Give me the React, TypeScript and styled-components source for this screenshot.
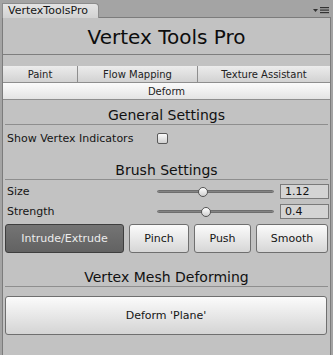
import React from 'react';
import styled, { createGlobalStyle } from 'styled-components';

const GlobalStyle = createGlobalStyle`
    html, body {
        margin:0;
        padding:0;
        background:#a4a4a4;
        font-family:"DejaVu Sans", "Liberation Sans", sans-serif;
        color:#111;
    }
`

const sliders = [
    { label: 'Size', value: 1.12, min: 0, max: 3, text: '1.12' },
    { label: 'Strength', value: 0.4, min: 0, max: 1, text: '0.4' },
]

const tools = [
    { name: 'Intrude/Extrude', width: 119, active: true },
    { name: 'Pinch', width: 60, active: false },
    { name: 'Push', width: 57, active: false },
    { name: 'Smooth', width: 72, active: false },
]

const App = () => {
    return (
        <Window>
            <GlobalStyle />
            <TabStrip>
                <Tab>VertexToolsPro</Tab>
                <MenuIcon width="16" height="8" viewBox="0 0 16 8">
                    <path d="M0 3 L5 3 L2.5 6 Z" fill="#333" />
                    <rect x="7" y="1" width="9" height="1.2" fill="#333" />
                    <rect x="7" y="3.5" width="9" height="1.2" fill="#333" />
                    <rect x="7" y="6" width="9" height="1.2" fill="#333" />
                </MenuIcon>
            </TabStrip>
            <Panel>
                <TitleBar>Vertex Tools Pro</TitleBar>
                <Toolbar>
                    <ToolbarRow>
                        <ToolbarButton $width={75}>Paint</ToolbarButton>
                        <ToolbarButton $width={120}>Flow Mapping</ToolbarButton>
                        <ToolbarButton $width={132}>Texture Assistant</ToolbarButton>
                    </ToolbarRow>
                    <ToolbarRow>
                        <ToolbarButton $selected>Deform</ToolbarButton>
                    </ToolbarRow>
                </Toolbar>

                <Heading $top={6}>General Settings</Heading>
                <FieldRow $top={4}>
                    <Label>Show Vertex Indicators</Label>
                    <Checkbox />
                </FieldRow>

                <Heading $top={14}>Brush Settings</Heading>
                <Sliders>
                    {sliders.map((s) => {
                        const pct = (s.value - s.min) / (s.max - s.min)
                        return (
                            <SliderRow key={s.label}>
                                <Label>{s.label}</Label>
                                <Track>
                                    <Thumb style={{ left: `${pct * 107}px` }} />
                                </Track>
                                <NumberField>{s.text}</NumberField>
                            </SliderRow>
                        )
                    })}
                </Sliders>
                <ToolButtons>
                    {tools.map((t) => (
                        <ToolButton key={t.name} $width={t.width} $active={t.active}>{t.name}</ToolButton>
                    ))}
                </ToolButtons>

                <Heading $top={15}>Vertex Mesh Deforming</Heading>
                <BigButton>Deform 'Plane'</BigButton>
            </Panel>
        </Window>
    );
};

const Window = styled.div`
    width:333px;
    height:355px;
    display:flex;
    flex-direction:column;
    overflow:hidden;
`
const TabStrip = styled.div`
    height:17px;
    display:flex;
    align-items:flex-end;
    justify-content:space-between;
    padding-left:2px;
    padding-right:4px;
    flex-shrink:0;
`
const Tab = styled.div`
    width:97px;
    height:15px;
    box-sizing:border-box;
    background:linear-gradient(#e4e4e4, #d2d2d2);
    border:1px solid #8c8c8c;
    border-bottom:none;
    border-top-right-radius:4px;
    font-size:11px;
    line-height:14px;
    padding-left:5px;
    color:#151515;
    margin-bottom:-1px;
    position:relative;
    z-index:1;
`
const MenuIcon = styled.svg`
    margin-bottom:3px;
`
const Panel = styled.div`
    flex:1;
    margin:0 2px;
    background:#c2c2c2;
    border:1px solid #7c7c7c;
    border-bottom:none;
    display:flex;
    flex-direction:column;
`
const TitleBar = styled.div`
    height:37px;
    border-bottom:1px solid #7e7e7e;
    display:flex;
    align-items:center;
    justify-content:center;
    font-size:20px;
    padding-top:1px;
    box-sizing:border-box;
    color:#0d0d0d;
`
const Toolbar = styled.div`
    margin-top:11px;
    display:flex;
    flex-direction:column;
`
const ToolbarRow = styled.div`
    display:flex;
    height:17px;
`
const ToolbarButton = styled.div<{ $width?: number; $selected?: boolean }>`
    ${(p) => (p.$width ? `width:${p.$width}px;` : 'flex:1;')}
    box-sizing:border-box;
    display:flex;
    align-items:center;
    justify-content:center;
    font-size:10px;
    color:#222;
    background:${(p) => (p.$selected ? 'linear-gradient(#fbfbfb, #e4e4e4)' : 'linear-gradient(#ececec, #d2d2d2)')};
    border-bottom:1px solid #8e8e8e;
    border-right:1px solid #8e8e8e;
    &:last-child {
        border-right:none;
    }
`
const Heading = styled.div<{ $top: number }>`
    margin:${(p) => p.$top}px 2px 0 2px;
    height:18px;
    border-bottom:1px solid #8e8e8e;
    font-size:14px;
    line-height:18px;
    text-align:center;
    color:#111;
`
const FieldRow = styled.div<{ $top: number }>`
    margin-top:${(p) => p.$top}px;
    height:18px;
    display:flex;
    align-items:center;
    padding-left:4px;
`
const Label = styled.div`
    width:150px;
    font-size:11px;
    color:#151515;
`
const Checkbox = styled.div`
    width:11px;
    height:11px;
    box-sizing:border-box;
    border:1px solid #5a5a5a;
    border-radius:2px;
    background:linear-gradient(#fafafa, #d0d0d0);
`
const Sliders = styled.div`
    margin-top:1px;
    display:flex;
    flex-direction:column;
`
const SliderRow = styled.div`
    height:20px;
    display:flex;
    align-items:center;
    padding-left:4px;
`
const Track = styled.div`
    position:relative;
    width:117px;
    height:3px;
    border-radius:2px;
    background:linear-gradient(#5e5e5e, #a8a8a8);
    border:1px solid #6e6e6e;
    box-sizing:border-box;
`
const Thumb = styled.div`
    position:absolute;
    top:-4px;
    width:10px;
    height:10px;
    box-sizing:border-box;
    border-radius:50%;
    border:1px solid #555;
    background:linear-gradient(#ffffff, #cfcfcf);
`
const NumberField = styled.div`
    margin-left:6px;
    width:49px;
    height:15px;
    box-sizing:border-box;
    border:1px solid #7a7a7a;
    background:#d4d4d4;
    font-size:11px;
    line-height:13px;
    padding-left:4px;
    color:#111;
`
const ToolButtons = styled.div`
    margin-top:3px;
    display:flex;
    gap:5px;
    padding-left:2px;
`
const ToolButton = styled.div<{ $width: number; $active: boolean }>`
    width:${(p) => p.$width}px;
    height:29px;
    box-sizing:border-box;
    border-radius:3px;
    display:flex;
    align-items:center;
    justify-content:center;
    font-size:11px;
    border:1px solid ${(p) => (p.$active ? '#3e3e3e' : '#6f6f6f')};
    color:${(p) => (p.$active ? '#ececec' : '#151515')};
    background:${(p) => (p.$active ? 'linear-gradient(#747474, #626262)' : 'linear-gradient(#fbfbfb, #d6d6d6)')};
`
const BigButton = styled.div`
    margin:9px 3px 0 2px;
    height:39px;
    box-sizing:border-box;
    border:1px solid #6f6f6f;
    border-radius:3px;
    display:flex;
    align-items:center;
    justify-content:center;
    font-size:11px;
    color:#151515;
    background:linear-gradient(#fbfbfb, #d4d4d4);
`

export default App;
